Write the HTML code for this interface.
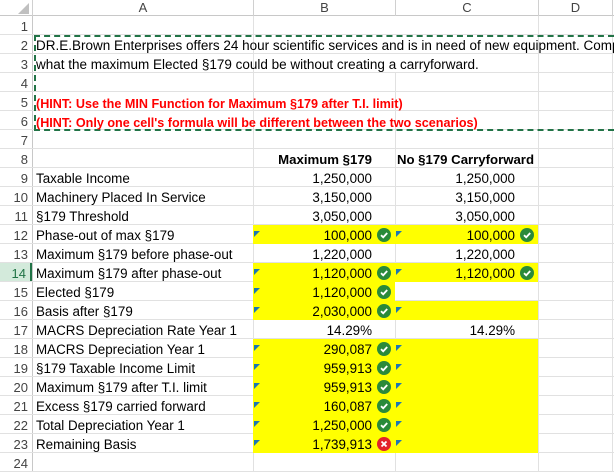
<!DOCTYPE html>
<html><head><meta charset="utf-8"><style>
*{margin:0;padding:0;box-sizing:border-box}
body{width:614px;height:471px;overflow:hidden;background:#fff;font-family:"Liberation Sans",sans-serif;font-size:13.4px;color:#000;position:relative}
.abs{position:absolute}
.hl{position:absolute;background:#e1e1e1}
.vl{position:absolute;background:#e1e1e1;width:1px}
.rn{position:absolute;left:0;width:32px;text-align:right;padding-right:4px;color:#444;font-size:13px;height:19px;line-height:21px;background:#fff}
.t{position:absolute;height:19px;line-height:22px;white-space:nowrap}
.r{text-align:right}
.y{position:absolute;background:#ffff00;height:19px}
.ck{position:absolute;width:14px;height:14px;border-radius:50%;background:#2a8a3a}
.ck svg,.x svg{position:absolute;left:0;top:0}
.x{position:absolute;width:14px;height:14px;border-radius:50%;background:#e2232a}
.tri{position:absolute;width:0;height:0;border-top:6px solid #1b76b5;border-right:6px solid transparent}
</style></head><body>
<div class="abs" style="left:0;top:0;width:614px;height:16px;background:#fff;border-bottom:1px solid #c8c8c8"></div>
<div class="abs" style="left:18px;top:3px;width:0;height:0;border-bottom:11px solid #c0c0c0;border-left:11px solid transparent"></div>
<div class="abs" style="left:32px;top:0;width:1px;height:16px;background:#d0d0d0"></div>
<div class="abs" style="left:253px;top:0;width:1px;height:16px;background:#d0d0d0"></div>
<div class="abs" style="left:395px;top:0;width:1px;height:16px;background:#d0d0d0"></div>
<div class="abs" style="left:538px;top:0;width:1px;height:16px;background:#d0d0d0"></div>
<div class="abs" style="left:612px;top:0;width:1px;height:16px;background:#d0d0d0"></div>
<div class="t" style="left:33px;width:220px;top:-3px;text-align:center;color:#444;font-size:13px">A</div>
<div class="t" style="left:254px;width:141px;top:-3px;text-align:center;color:#444;font-size:13px">B</div>
<div class="t" style="left:396px;width:142px;top:-3px;text-align:center;color:#444;font-size:13px">C</div>
<div class="t" style="left:539px;width:73px;top:-3px;text-align:center;color:#444;font-size:13px">D</div>
<div class="abs" style="left:32px;top:16px;width:1px;height:455px;background:#c8c8c8"></div>
<div id="grid"></div>
<div class="y" style="left:253px;top:225px;width:285px"></div>
<div class="y" style="left:253px;top:263px;width:285px"></div>
<div class="y" style="left:253px;top:282px;width:142px"></div>
<div class="y" style="left:253px;top:301px;width:285px"></div>
<div class="y" style="left:253px;top:339px;width:285px;height:114px"></div>
<div class="vl" style="left:253px;top:16px;height:209px"></div>
<div class="vl" style="left:253px;top:244px;height:19px"></div>
<div class="vl" style="left:253px;top:320px;height:19px"></div>
<div class="vl" style="left:253px;top:453px;height:18px"></div>
<div class="vl" style="left:395px;top:73px;height:152px"></div>
<div class="vl" style="left:395px;top:244px;height:19px"></div>
<div class="vl" style="left:395px;top:320px;height:19px"></div>
<div class="vl" style="left:395px;top:453px;height:18px"></div>
<div class="vl" style="left:538px;top:16px;height:455px"></div>
<div class="vl" style="left:612px;top:16px;height:455px"></div>
<div class="abs" style="left:34px;top:35px;width:580px;height:96px;border:2px dashed #217346;border-right:none"></div>
<div class="t" style="left:36px;top:35px;font-size:13.5px">DR.E.Brown Enterprises offers 24 hour scientific services and is in need of new equipment. Complete</div>
<div class="t" style="left:36px;top:54px;font-size:13.5px">what the maximum Elected §179 could be without creating a carryforward.</div>
<div class="t" style="left:36px;top:93px;color:#f00;font-weight:bold;font-size:12.6px">(HINT: Use the MIN Function for Maximum §179 after T.I. limit)</div>
<div class="t" style="left:36px;top:112px;color:#f00;font-weight:bold;font-size:12.6px">(HINT: Only one cell's formula will be different between the two scenarios)</div>
<div class="t r" style="left:253px;width:119px;top:149px;font-weight:bold;font-size:13.2px">Maximum §179</div>
<div class="t r" style="left:395px;width:139px;top:149px;font-weight:bold;font-size:13.2px">No §179 Carryforward</div>
<div id="rows"></div>
<script>
var g='';
for(var n=1;n<=24;n++){var t=16+19*(n-1);
g+='<div class="rn" style="top:'+t+'px'+(n==14?';background:#d3eadb;color:#217346;border-right:2px solid #217346':'')+'">'+n+'</div>';
g+='<div class="hl" style="left:0;width:614px;top:'+(t+18)+'px;height:1px"></div>';}
document.getElementById('grid').innerHTML=g;
var L=["Taxable Income","Machinery Placed In Service","§179 Threshold","Phase-out of max §179","Maximum §179 before phase-out","Maximum §179 after phase-out","Elected §179","Basis after §179","MACRS Depreciation Rate Year 1","MACRS Depreciation Year 1","§179 Taxable Income Limit","Maximum §179 after T.I. limit","Excess §179 carried forward","Total Depreciation Year 1","Remaining Basis"];
var B=["1,250,000","3,150,000","3,050,000","100,000","1,220,000","1,120,000","1,120,000","2,030,000","14.29%","290,087","959,913","959,913","160,087","1,250,000","1,739,913"];
var C=["1,250,000","3,150,000","3,050,000","100,000","1,220,000","1,120,000","","","14.29%","","","","","",""];
var ckB=[0,0,0,1,0,1,1,1,0,1,1,1,1,1,2];
var trB=[0,0,0,1,0,1,1,1,0,1,1,1,1,1,1];
var trC=[0,0,0,1,0,1,0,1,0,1,1,1,1,1,1];
var ckC=[0,0,0,1,0,1,0,0,0,0,0,0,0,0,0];
var chk='<svg width="14" height="14"><path d="M4 7.2 L6.2 9.3 L10.2 5" stroke="#fff" stroke-width="1.8" fill="none"/></svg>';
var xs='<svg width="14" height="14"><path d="M4.5 4.5 L9.5 9.5 M9.5 4.5 L4.5 9.5" stroke="#fff" stroke-width="1.8"/></svg>';
var h='';
for(var i=0;i<15;i++){var t=16+19*(8+i);
h+='<div class="t" style="left:36px;top:'+t+'px">'+L[i]+'</div>';
h+='<div class="t r" style="left:253px;width:119px;top:'+t+'px">'+B[i]+'</div>';
if(C[i])h+='<div class="t r" style="left:395px;width:120px;top:'+t+'px">'+C[i]+'</div>';
if(trB[i])h+='<div class="tri" style="left:254px;top:'+(t+6)+'px"></div>';
if(trC[i])h+='<div class="tri" style="left:396px;top:'+(t+6)+'px"></div>';
if(ckB[i]==1)h+='<div class="ck" style="left:377px;top:'+(t+3)+'px">'+chk+'</div>';
if(ckB[i]==2)h+='<div class="x" style="left:377px;top:'+(t+3)+'px">'+xs+'</div>';
if(ckC[i])h+='<div class="ck" style="left:520px;top:'+(t+3)+'px">'+chk+'</div>';}
document.getElementById('rows').innerHTML=h;
</script>
</body></html>
